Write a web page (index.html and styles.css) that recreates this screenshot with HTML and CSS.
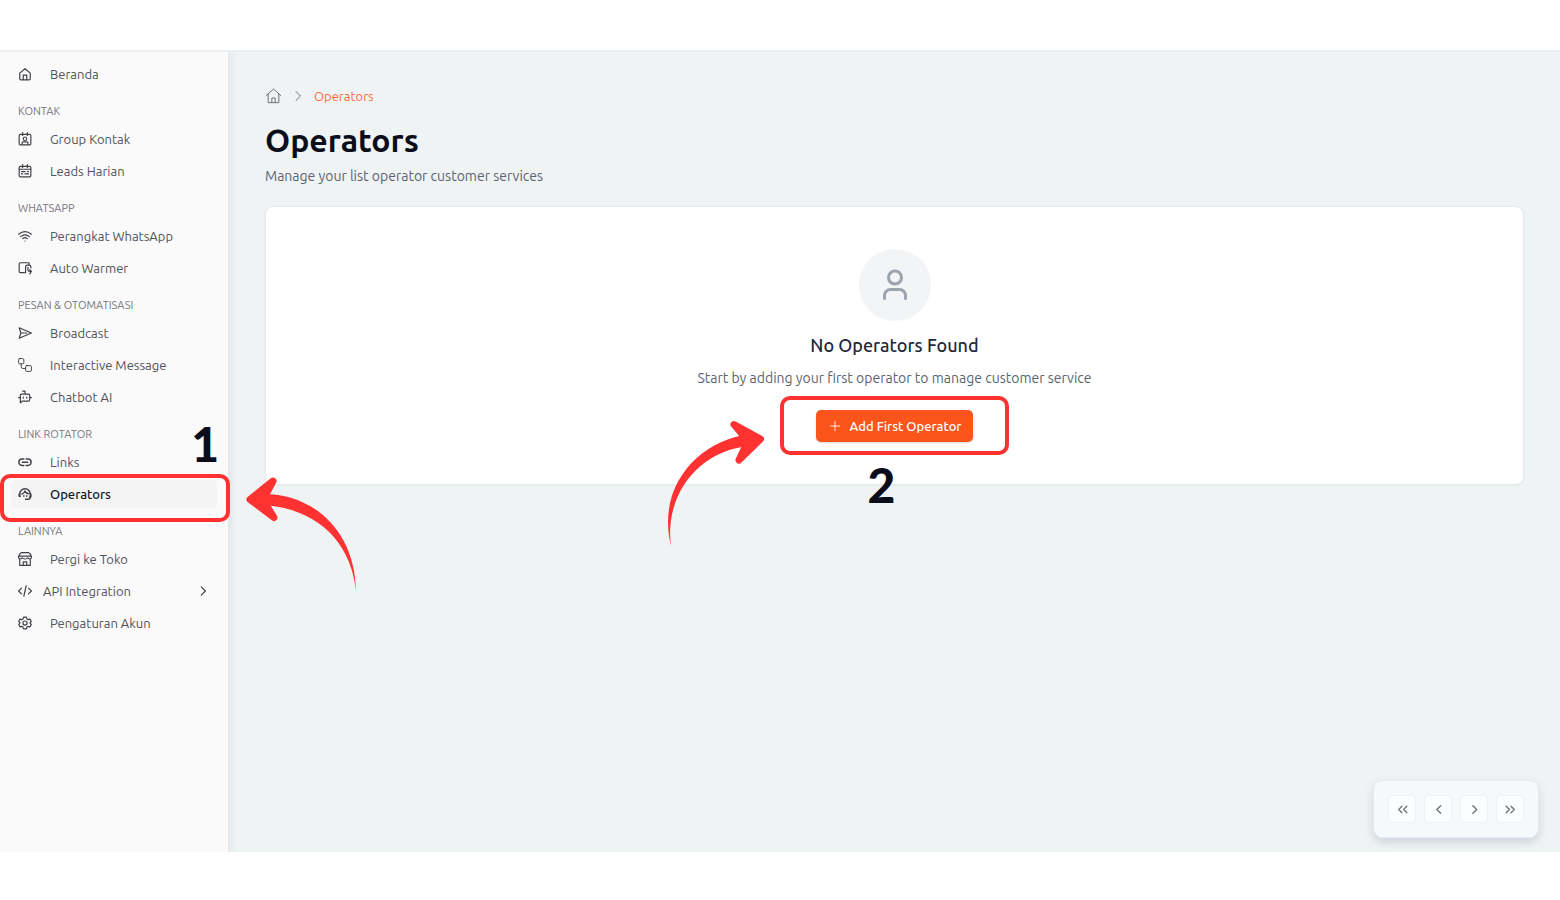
FILE: index.html
```html
<!DOCTYPE html>
<html lang="id">
<head>
    <meta charset="UTF-8">
    <meta name="viewport" content="width=device-width, initial-scale=1.0">
    <title>Operators</title>
    <link rel="stylesheet" href="styles.css">
</head>
<body>
    <div class="app">
        <nav class="sidebar">
            <ul class="menu">
                <li><a href="#" class="menu-link">
                    <svg class="icon" viewBox="0 0 24 24"><path d="M3 10.500 12 3l9 7.500V20a2 2 0 0 1-2 2H5a2 2 0 0 1-2-2zM9 22v-8h6v8"/></svg>
                    <span>Beranda</span>
                </a></li>
            </ul>

            <h3 class="menu-title">KONTAK</h3>
            <ul class="menu">
                <li><a href="#" class="menu-link">
                    <svg class="icon" viewBox="0 0 24 24"><rect x="2" y="4" width="20" height="18" rx="2"/><path d="M8 1v5M16 1v5M7 21v-2q0-2 2-2h6q2 0 2 2v2"/><circle cx="12" cy="11.500" r="3"/></svg>
                    <span>Group Kontak</span>
                </a></li>
                <li><a href="#" class="menu-link">
                    <svg class="icon" viewBox="0 0 24 24"><rect x="2" y="4" width="20" height="18" rx="2"/><path d="M8 1v5M16 1v5M2 9h20M6 13h6M16 13h2M6 17h2M12 17h6"/></svg>
                    <span>Leads Harian</span>
                </a></li>
            </ul>

            <h3 class="menu-title">WHATSAPP</h3>
            <ul class="menu">
                <li><a href="#" class="menu-link">
                    <svg class="icon" viewBox="0 0 24 24"><path d="M1 9q11-9 22 0M4.500 13q7.500-6 15 0M8 16.500q4-3.500 8 0M12 20.500h.1"/></svg>
                    <span>Perangkat WhatsApp</span>
                </a></li>
                <li><a href="#" class="menu-link">
                    <svg class="icon" viewBox="0 0 24 24"><path d="M11 20H4a2 2 0 0 1-2-2V5q0-2 2-2h15v3M13 20V10q0-3 3-3h3q3 0 3 3v2M17 11v4q0 3 3 3h3M20 15l3 3-3 4"/></svg>
                    <span>Auto Warmer</span>
                </a></li>
            </ul>

            <h3 class="menu-title">PESAN &amp; OTOMATISASI</h3>
            <ul class="menu">
                <li><a href="#" class="menu-link">
                    <svg class="icon" viewBox="0 0 24 24"><path d="M2 3l21 9-21 9 3-9zM5 12h10"/></svg>
                    <span>Broadcast</span>
                </a></li>
                <li><a href="#" class="menu-link">
                    <svg class="icon icon-thin" viewBox="0 0 24 24"><rect x="1" y="1" width="9" height="9" rx="2"/><rect x="13" y="13" width="10" height="10" rx="2"/><path d="M5.500 10v5q0 3 3 3H13"/></svg>
                    <span>Interactive Message</span>
                </a></li>
                <li><a href="#" class="menu-link">
                    <svg class="icon" viewBox="0 0 24 24"><path d="M8 2h4v5M4 22V9q0-2 2-2h12q2 0 2 2v8q0 2-2 2H8zM1 13h3M20 13h3M9 12v2M15 12v2"/></svg>
                    <span>Chatbot AI</span>
                </a></li>
            </ul>

            <h3 class="menu-title">LINK ROTATOR</h3>
            <ul class="menu">
                <li><a href="#" class="menu-link">
                    <svg class="icon icon-bold" viewBox="0 0 24 24"><path d="M10 18H7A5 5 0 0 1 7 7h3M14 7h3a5 5 0 0 1 0 11h-3M7.500 12.500h9"/></svg>
                    <span>Links</span>
                </a></li>
                <li class="step-one">
                    <a href="#" class="menu-link active">
                        <svg class="icon icon-bold" viewBox="0 0 24 24"><path d="M3 16v-4a9 9 0 0 1 18 0v5q0 4-4 4h-4M4 16H2v-4M20 17h2v-5M7 12q4-1 5-5 2 4 6 4M10 15v1M15 15v1"/></svg>
                        <span>Operators</span>
                    </a>
                    <div class="callout callout-menu"></div>
                    <span class="step-number number-one">1</span>
                    <svg class="arrow arrow-one" viewBox="240 470 120 125">
                        <path class="arrow-head" d="M273 481 250 499.500 274 517.500 263 500z"/>
                        <path class="arrow-tail" d="M260 494C310 492 355 528 356 591 351 542 317 507 260 505z"/>
                    </svg>
                </li>
            </ul>

            <h3 class="menu-title">LAINNYA</h3>
            <ul class="menu">
                <li><a href="#" class="menu-link">
                    <svg class="icon" viewBox="0 0 24 24"><path d="M6 1h12q4 2 5 7v1q0 3-3 3-2 0-3-2-1 2-5 2t-5-2q-1 2-3 2-3 0-3-3V8q1-5 5-7zM2 7h20M3 12v11h18V12M9 22v-5h6v5"/></svg>
                    <span>Pergi ke Toko</span>
                </a></li>
                <li><a href="#" class="menu-link has-children">
                    <svg class="icon" viewBox="0 0 24 24"><path d="M6 7l-5 5 5 5M18 7l5 5-5 5M14 3l-4 18"/></svg>
                    <span>API Integration</span>
                    <svg class="icon chevron" viewBox="0 0 24 24"><path d="M9 5l7 7-7 7"/></svg>
                </a></li>
                <li><a href="#" class="menu-link">
                    <svg class="icon" viewBox="0 0 24 24"><path d="M9.500 2h5l.8 3 2.200 1.300 3-.9 2.300 4-2.200 2.600 2.200 2.600-2.300 4-3-.9-2.200 1.300-.8 3h-5l-.8-3-2.200-1.300-3 .9-2.300-4L3.400 12 1.200 9.400l2.300-4 3 .9L8.700 5z"/><circle cx="12" cy="12" r="3.500"/></svg>
                    <span>Pengaturan Akun</span>
                </a></li>
            </ul>
        </nav>

        <main class="content">
            <nav class="breadcrumb">
                <a href="#" aria-label="Beranda"><svg class="icon" viewBox="0 0 24 24"><path d="M1 11.500 12 1.500l11 10M4 9v13h16V9M9.500 22v-7h5v7"/></svg></a>
                <svg class="icon separator" viewBox="0 0 24 24"><path d="M8 3l9 9-9 9"/></svg>
                <a href="#" class="current">Operators</a>
            </nav>
            <h1>Operators</h1>
            <p class="subtitle">Manage your list operator customer services</p>

            <section class="card">
                <div class="avatar">
                    <svg viewBox="0 0 36 36"><circle cx="18" cy="10.500" r="6.500"/><path d="M7.500 31.500v-3a6 6 0 0 1 6-6h9a6 6 0 0 1 6 6v3"/></svg>
                </div>
                <h2>No Operators Found</h2>
                <p class="empty-text">Start by adding your first operator to manage customer service</p>
                <div class="step-two">
                    <button type="button" class="btn-add">
                        <svg class="icon" viewBox="0 0 24 24"><path d="M12 4v16M4 12h16"/></svg>
                        Add First Operator
                    </button>
                    <div class="callout callout-button"></div>
                    <span class="step-number number-two">2</span>
                    <svg class="arrow arrow-two" viewBox="660 415 110 135">
                        <path class="arrow-head" d="M734 424.500 760.500 439 739 460 748 441z"/>
                        <path class="arrow-tail" d="M750 434C700 440 656 485 671 546 664 496 698 450 750 446z"/>
                    </svg>
                </div>
            </section>

            <div class="pagination">
                <button type="button" aria-label="First page"><svg class="icon" viewBox="0 0 24 24"><path d="M11 6l-6 6 6 6M20 6l-6 6 6 6"/></svg></button>
                <button type="button" aria-label="Previous page"><svg class="icon" viewBox="0 0 24 24"><path d="M16 5l-7 7 7 7"/></svg></button>
                <button type="button" aria-label="Next page"><svg class="icon" viewBox="0 0 24 24"><path d="M9 5l7 7-7 7"/></svg></button>
                <button type="button" aria-label="Last page"><svg class="icon" viewBox="0 0 24 24"><path d="M4 6l6 6-6 6M13 6l6 6-6 6"/></svg></button>
            </div>
        </main>
    </div>
</body>
</html>
```
FILE: styles.css
```css
* {
    margin: 0;
    padding: 0;
    box-sizing: border-box;
}

body {
    font-family: Ubuntu, "Noto Sans", sans-serif;
    background: #fff;
    padding: 50px 0 48px;
}

.app {
    display: flex;
    min-height: calc(100vh - 98px);
    border-top: 2px solid #eceff1;
}

.icon {
    width: 14px;
    height: 14px;
    flex: none;
    fill: none;
    stroke: currentColor;
    stroke-width: 2;
    stroke-linecap: round;
    stroke-linejoin: round;
}

.icon-thin {
    stroke-width: 1.6;
}

.icon-bold {
    stroke-width: 2.5;
}

/* sidebar */
.sidebar {
    position: relative;
    z-index: 1;
    flex: 0 0 229px;
    padding: 8px 11px;
    background: #fafafa;
    border-right: 1px solid #e5e9ed;
    box-shadow: 2px 0 6px #dfe4e8;
    clip-path: inset(0 -140px 0 0);
}

.menu {
    display: flex;
    flex-direction: column;
    gap: 4px;
    list-style: none;
}

.menu-link {
    display: flex;
    align-items: center;
    gap: 18px;
    height: 28px;
    padding: 0 7px;
    border-radius: 5px;
    color: #52525b;
    font-size: 13px;
    text-decoration: none;
}

.menu-link.active {
    background: #f4f4f5;
    color: #18181b;
    font-weight: 500;
}

.menu-link.has-children {
    gap: 11px;
}

.menu-link .icon {
    color: #3f3f46;
}

.menu-link .chevron {
    margin-left: auto;
}

.menu-title {
    margin: 15px 7px 6px;
    color: #75757d;
    font-size: 11px;
    font-weight: 400;
    line-height: 16px;
}

/* content */
.content {
    position: relative;
    flex: 1;
    min-width: 0;
    padding: 36px;
    background: #eff3f4;
    overflow: hidden;
}

.breadcrumb {
    display: flex;
    align-items: center;
    height: 16px;
    color: #71717a;
    font-size: 13px;
    line-height: 16px;
}

.breadcrumb a {
    display: flex;
    color: inherit;
    text-decoration: none;
}

.breadcrumb .icon {
    width: 17px;
    height: 16px;
    stroke-width: 1.5;
}

.breadcrumb .separator {
    width: 12px;
    height: 12px;
    margin: 0 10px;
    stroke-width: 2;
}

.breadcrumb .current {
    color: #fb6b3a;
}

h1 {
    margin-top: 16px;
    color: #0b0e1a;
    font-size: 32px;
    font-weight: 600;
    line-height: 40px;
}

.subtitle {
    margin-top: 6px;
    color: #5b6472;
    font-size: 14px;
    line-height: 20px;
}

.card {
    display: flex;
    flex-direction: column;
    align-items: center;
    margin-top: 20px;
    padding: 42px 20px;
    background: #fff;
    border: 1px solid #e4e9ee;
    border-radius: 8px;
    box-shadow: 0 1px 2px rgba(0, 0, 0, 0.04);
}

.avatar {
    display: flex;
    align-items: center;
    justify-content: center;
    width: 72px;
    height: 72px;
    border-radius: 50%;
    background: #f3f4f6;
}

.avatar svg {
    width: 36px;
    height: 36px;
    fill: none;
    stroke: #9ca3af;
    stroke-width: 3;
    stroke-linecap: round;
}

h2 {
    margin-top: 12px;
    color: #1f2937;
    font-size: 18px;
    font-weight: 500;
    line-height: 24px;
}

.empty-text {
    margin-top: 11px;
    color: #5b6472;
    font-size: 14px;
    line-height: 20px;
}

.btn-add {
    display: flex;
    align-items: center;
    gap: 8px;
    height: 32px;
    padding: 0 12px;
    border: none;
    border-radius: 5px;
    background: #fc551c;
    box-shadow: 0 1px 2px rgba(0, 0, 0, 0.15);
    color: #fff;
    font-family: inherit;
    font-size: 13px;
    font-weight: 500;
    cursor: pointer;
}

.btn-add .icon {
    stroke-width: 1.5;
}

.pagination {
    position: absolute;
    right: 21px;
    bottom: 14px;
    display: flex;
    gap: 8px;
    padding: 14px;
    background: #f6f9fc;
    border: 1px solid #e8edf4;
    border-radius: 10px;
    box-shadow: 0 4px 8px rgba(100, 116, 139, 0.25);
}

.pagination button {
    display: flex;
    align-items: center;
    justify-content: center;
    width: 28px;
    height: 28px;
    background: #fcfdfe;
    border: 1px solid #edf0f4;
    border-radius: 5px;
    color: #71717a;
    cursor: pointer;
}

.pagination .icon {
    width: 13px;
    height: 13px;
    stroke-width: 2.5;
}

/* tutorial steps */
.step-one,
.step-two {
    position: relative;
}

.step-two {
    margin-top: 22px;
}

.callout {
    position: absolute;
    border: 4px solid #ff3131;
    border-radius: 10px;
    pointer-events: none;
}

.callout-menu {
    inset: -6px -13px -14px -11px;
}

.callout-button {
    inset: -14px -36px -13px;
}

.step-number {
    position: absolute;
    color: #0b0e1a;
    font-family: Lato, sans-serif;
    font-size: 48px;
    font-weight: 900;
    line-height: 48px;
}

.number-one {
    right: -2px;
    top: -60px;
}

.number-two {
    left: 52px;
    top: 51px;
}

.arrow {
    position: absolute;
    pointer-events: none;
}

.arrow-one {
    left: 229px;
    top: -10px;
    width: 120px;
    height: 125px;
}

.arrow-two {
    left: -156px;
    top: 5px;
    width: 110px;
    height: 135px;
}

.arrow-head {
    fill: #ff3131;
    stroke: #ff3131;
    stroke-width: 7;
    stroke-linejoin: round;
}

.arrow-tail {
    fill: #ff3131;
}
```
